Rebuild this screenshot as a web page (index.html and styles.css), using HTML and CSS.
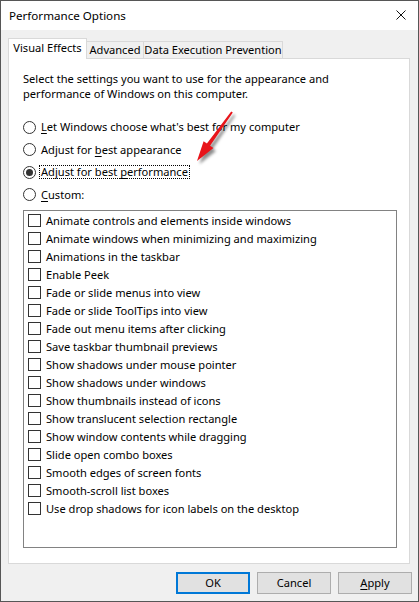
FILE: index.html
```html
<!DOCTYPE html>
<html>
<head>
<meta charset="utf-8">
<link rel="stylesheet" href="styles.css">
</head>
<body>
<div class="window">
  <div class="titlebar">
    <span class="title">Performance Options</span>
    <span class="close">
      <svg width="10" height="10" viewBox="0 0 10 10"><path d="M0.5 0.5 L9.5 9.5 M9.5 0.5 L0.5 9.5" stroke="#111" stroke-width="1" fill="none"/></svg>
    </span>
  </div>
  <div class="content">
    <div class="tabs">
      <div class="tab tab-active tab-ve">Visual Effects</div>
      <div class="tab tab-adv">Advanced</div>
      <div class="tab tab-dep">Data Execution Prevention</div>
    </div>
    <div class="panel">
      <p class="intro">Select the settings you want to use for the appearance and<br>performance of Windows on this computer.</p>
      <div class="radios">
        <div class="radio-row"><span class="radio"></span><span class="rlabel"><u>L</u>et Windows choose what's best for my computer</span></div>
        <div class="radio-row"><span class="radio"></span><span class="rlabel">Adjust for <u>b</u>est appearance</span></div>
        <div class="radio-row"><span class="radio checked"></span><span class="rlabel focus">Adjust for best <u>p</u>erformance</span></div>
        <div class="radio-row"><span class="radio"></span><span class="rlabel"><u>C</u>ustom:</span></div>
      </div>
      <div class="listbox">
        <div class="item"><span class="check"></span><span>Animate controls and elements inside windows</span></div>
        <div class="item"><span class="check"></span><span>Animate windows when minimizing and maximizing</span></div>
        <div class="item"><span class="check"></span><span>Animations in the taskbar</span></div>
        <div class="item"><span class="check"></span><span>Enable Peek</span></div>
        <div class="item"><span class="check"></span><span>Fade or slide menus into view</span></div>
        <div class="item"><span class="check"></span><span>Fade or slide ToolTips into view</span></div>
        <div class="item"><span class="check"></span><span>Fade out menu items after clicking</span></div>
        <div class="item"><span class="check"></span><span>Save taskbar thumbnail previews</span></div>
        <div class="item"><span class="check"></span><span>Show shadows under mouse pointer</span></div>
        <div class="item"><span class="check"></span><span>Show shadows under windows</span></div>
        <div class="item"><span class="check"></span><span>Show thumbnails instead of icons</span></div>
        <div class="item"><span class="check"></span><span>Show translucent selection rectangle</span></div>
        <div class="item"><span class="check"></span><span>Show window contents while dragging</span></div>
        <div class="item"><span class="check"></span><span>Slide open combo boxes</span></div>
        <div class="item"><span class="check"></span><span>Smooth edges of screen fonts</span></div>
        <div class="item"><span class="check"></span><span>Smooth-scroll list boxes</span></div>
        <div class="item"><span class="check"></span><span>Use drop shadows for icon labels on the desktop</span></div>
      </div>
    </div>
    <div class="buttons">
      <button class="btn btn-default">OK</button>
      <button class="btn">Cancel</button>
      <button class="btn"><u>A</u>pply</button>
    </div>
  </div>
  <svg class="arrow" width="419" height="602" viewBox="0 0 419 602">
    <defs>
      <filter id="sh" x="-50%" y="-50%" width="200%" height="200%">
        <feGaussianBlur stdDeviation="1.6"/>
      </filter>
    </defs>
    <polygon transform="translate(2.5,3)" filter="url(#sh)" fill="#000" fill-opacity="0.45" points="197,161 203.6,141.2 206.9,143.5 231.2,111.4 232.8,112.6 210.1,145.7 213.4,148 "/>
    <polygon fill="#e8141a" points="197,161 203.6,141.2 206.9,143.5 231.2,111.4 232.8,112.6 210.1,145.7 213.4,148 "/>
  </svg>
</div>
</body>
</html>
```

FILE: styles.css
```css
* { box-sizing: border-box; }
html, body {
  margin: 0;
  padding: 0;
  background: #f0f0f0;
}
body {
  font-family: "Noto Sans", "Open Sans", sans-serif;
  font-size: 11.1px;
  line-height: 15px;
  color: #000;
}
.window {
  position: relative;
  width: 419px;
  height: 602px;
  border: 1px solid #565656;
  background: #f0f0f0;
  display: flex;
  flex-direction: column;
  overflow: hidden;
}
.titlebar {
  height: 29px;
  background: #fff;
  display: flex;
  align-items: center;
  justify-content: space-between;
  padding: 0 12px 1px 8px;
}
.title {
  font-size: 11.6px;
  color: #000;
}
.close {
  display: flex;
  width: 10px;
  height: 10px;
}
.content {
  flex: 1;
  display: flex;
  flex-direction: column;
  padding: 8px 6px 0 7px;
}
.tabs {
  display: flex;
  align-items: flex-end;
  height: 20px;
}
.tab {
  height: 17px;
  border: 1px solid #d9d9d9;
  border-bottom: none;
  background: #f0f0f0;
  display: flex;
  align-items: center;
  justify-content: center;
  margin-left: -1px;
  white-space: nowrap;
  padding-bottom: 1px;
}
.tab-active {
  height: 21px;
  margin-bottom: -1px;
  margin-left: 0;
  background: #fff;
  position: relative;
  z-index: 1;
  padding-bottom: 3px;
}
.tab-ve { width: 79px; }
.tab-adv { width: 58px; }
.tab-dep { width: 140px; }
.panel {
  width: 402px;
  height: 506px;
  border: 1px solid #d9d9d9;
  background: #fff;
  padding: 12px 0 0 14px;
}
.intro {
  margin: 0;
  line-height: 15px;
}
.radios {
  margin-top: 15px;
  display: flex;
  flex-direction: column;
}
.radio-row {
  height: 22.5px;
  display: flex;
  align-items: center;
}
.radio {
  width: 13px;
  height: 13px;
  border: 1px solid #333;
  border-radius: 50%;
  background: #fff;
  margin-right: 3px;
  display: flex;
  align-items: center;
  justify-content: center;
  flex: none;
}
.radio.checked::after {
  content: "";
  width: 7px;
  height: 7px;
  border-radius: 50%;
  background: #333;
}
.rlabel {
  display: inline-block;
  line-height: 12px;
  padding: 0 1px;
  border: 1px solid transparent;
}
.rlabel.focus {
  border: 1px dotted #000;
}
u {
  text-decoration: underline;
  text-underline-offset: 2px;
  text-decoration-thickness: 1px;
}
.listbox {
  margin-top: 4px;
  width: 374px;
  height: 338px;
  border: 1px solid #828282;
  padding: 0 0 0 4px;
  display: flex;
  flex-direction: column;
}
.item {
  height: 18px;
  display: flex;
  align-items: center;
  white-space: nowrap;
}
.check {
  width: 13px;
  height: 13px;
  border: 1px solid #333;
  background: #fff;
  margin-right: 5px;
  flex: none;
}
.buttons {
  margin-top: 8px;
  display: flex;
  justify-content: flex-end;
  gap: 7px;
}
.btn {
  width: 74px;
  height: 22px;
  background: #e1e1e1;
  border: 1px solid #adadad;
  font-family: "Noto Sans", "Open Sans", sans-serif;
  font-size: 11.1px;
  color: #000;
  padding: 0 0 1px 0;
  margin: 0;
  border-radius: 0;
}
.btn-default {
  border: 2px solid #0078d7;
}
.arrow {
  position: absolute;
  left: -1px;
  top: -1px;
  pointer-events: none;
}
```
